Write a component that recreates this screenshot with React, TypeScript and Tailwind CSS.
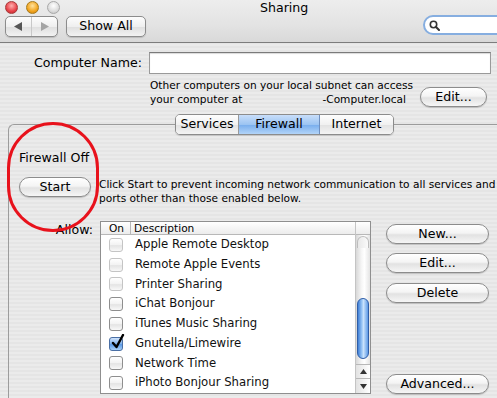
import React from 'react';

const font = { fontFamily: '"DejaVu Sans", "Liberation Sans", sans-serif' };

const rows = [
  { label: 'Apple Remote Desktop', on: false, dim: true },
  { label: 'Remote Apple Events', on: false, dim: true },
  { label: 'Printer Sharing', on: false, dim: true },
  { label: 'iChat Bonjour', on: false, dim: false },
  { label: 'iTunes Music Sharing', on: false, dim: false },
  { label: 'Gnutella/Limewire', on: true, dim: false },
  { label: 'Network Time', on: false, dim: false },
  { label: 'iPhoto Bonjour Sharing', on: false, dim: false },
];

function AquaButton({ children, className = '' }: { children: React.ReactNode; className?: string }) {
  return (
    <div
      className={`shrink-0 flex items-center justify-center rounded-full border border-[#8c8c8c] bg-[linear-gradient(#ffffff,#f4f4f4_45%,#e2e2e2_55%,#f6f6f6)] shadow-[0_1px_1px_rgba(0,0,0,0.18)] text-[12.6px] text-black ${className}`}
    >
      {children}
    </div>
  );
}

function Checkbox({ on, dim }: { on: boolean; dim: boolean }) {
  if (on) {
    return (
      <div className="relative w-[14px] h-[14px] rounded-[3px] border border-[#4a6fa5] bg-[linear-gradient(#cfe3fb,#7fb0ea_50%,#5b9ae6_55%,#a9d0f7)]">
        <svg className="absolute left-[1px] top-[-4px]" width="14" height="16" viewBox="0 0 14 16">
          <path d="M2 9 L5.5 13 L12 1" fill="none" stroke="#000" strokeWidth="2.4" strokeLinecap="round" strokeLinejoin="round" />
        </svg>
      </div>
    );
  }
  return (
    <div
      className={`w-[14px] h-[14px] rounded-[3px] border bg-[linear-gradient(#ffffff,#f2f2f2_50%,#e4e4e4_55%,#f8f8f8)] ${
        dim ? 'border-[#c4c4c4]' : 'border-[#8e8e8e]'
      }`}
    />
  );
}

export default function App() {
  return (
    <div
      style={font}
      className="relative w-[497px] h-[398px] overflow-hidden text-black bg-[repeating-linear-gradient(0deg,#ebebeb_0px,#ebebeb_2px,#e5e5e5_2px,#e5e5e5_4px)]"
    >
      {/* title bar + toolbar */}
      <div className="h-[43px] border-b border-[#7d7d7d] bg-[linear-gradient(#ededed,#e3e3e3_60%,#d9d9d9)] relative">
        <div className="flex items-center gap-[8px] pl-[5px] pt-[1px] h-[14px]">
          <div className="w-[13px] h-[13px] rounded-full border border-[#a53a3a] bg-[radial-gradient(circle_at_50%_35%,#ffb0b0,#e8434a_60%,#b8242a)]" />
          <div className="w-[13px] h-[13px] rounded-full border border-[#a67a1c] bg-[radial-gradient(circle_at_50%_35%,#ffe3a0,#f2a51f_60%,#c87a0d)]" />
          <div className="w-[13px] h-[13px] rounded-full border border-[#a8a8a8] bg-[radial-gradient(circle_at_50%_35%,#ffffff,#dcdcdc_60%,#bcbcbc)]" />
          <div className="ml-[192px] text-[12.6px] leading-none mt-[2px]">Sharing</div>
        </div>
        <div className="flex items-center mt-[2px] pl-[5px] h-[21px]">
          <div className="flex w-[53px] h-[21px] rounded-[5px] border border-[#8c8c8c] bg-[linear-gradient(#fdfdfd,#efefef_50%,#e0e0e0_55%,#f2f2f2)] shadow-[0_1px_1px_rgba(0,0,0,0.15)]">
            <div className="flex-1 flex items-center justify-center border-r border-[#c8c8c8]">
              <svg width="9" height="9" viewBox="0 0 9 9"><path d="M8 0 L0 4.5 L8 9 Z" fill="#555" /></svg>
            </div>
            <div className="flex-1 flex items-center justify-center">
              <svg width="9" height="9" viewBox="0 0 9 9"><path d="M1 0 L9 4.5 L1 9 Z" fill="#a4a4a4" /></svg>
            </div>
          </div>
          <div className="ml-[8px] w-[80px] h-[21px] flex items-center justify-center rounded-[5px] border border-[#8c8c8c] bg-[linear-gradient(#fdfdfd,#efefef_50%,#e0e0e0_55%,#f2f2f2)] shadow-[0_1px_1px_rgba(0,0,0,0.15)] text-[12.6px]">
            Show All
          </div>
          <div className="ml-auto mr-[-12px] w-[86px] h-[20px] -mt-[3px] rounded-full border-2 border-[#86aee0] bg-white flex items-center pl-[4px]">
            <svg width="11" height="11" viewBox="0 0 11 11">
              <circle cx="4.5" cy="4.5" r="3.2" fill="none" stroke="#333" strokeWidth="1.6" />
              <path d="M7 7 L10 10" stroke="#333" strokeWidth="2" strokeLinecap="round" />
            </svg>
          </div>
        </div>
      </div>

      {/* computer name */}
      <div className="flex mt-[9px]">
        <div className="w-[144px] text-right pr-[2px] text-[12.6px] leading-[22px]">Computer Name:</div>
        <div className="ml-[5px] w-[342px] h-[22px] border border-[#9a9a9a] border-t-[#7a7a7a] bg-white shadow-[inset_0_1px_1px_rgba(0,0,0,0.15)]" />
      </div>
      <div className="flex pl-[150px] mt-[3px] text-[10.6px] leading-[14px] whitespace-nowrap">
        <div className="w-[262px] pt-[1px]">
          <div>Other computers on your local subnet can access</div>
          <div className="flex justify-between">
            <span>your computer at</span>
            <span className="mr-[6px]">-Computer.local</span>
          </div>
        </div>
        <AquaButton className="ml-[8px] mt-[10px] w-[67px] h-[20px]">Edit...</AquaButton>
      </div>

      {/* tab panel */}
      <div className="ml-[8px] mt-[17px] h-[300px] border-l border-t border-[#9c9c9c] rounded-tl-[6px] relative">
        <div className="flex justify-start ml-[166px] -mt-[11px]">
          <div className="flex h-[21px] rounded-[5px] border border-[#8c8c8c] overflow-hidden shadow-[0_1px_1px_rgba(0,0,0,0.15)] text-[12.6px]">
            <div className="w-[63px] flex items-center justify-center bg-[linear-gradient(#fdfdfd,#f1f1f1_50%,#e3e3e3_55%,#f4f4f4)] border-r border-[#9a9a9a]">
              Services
            </div>
            <div className="w-[81px] flex items-center justify-center bg-[linear-gradient(#c8defa,#9cc4f2_50%,#7cb0ee_55%,#b2d4f8)] border-r border-[#6f8fbf]">
              Firewall
            </div>
            <div className="w-[73px] flex items-center justify-center bg-[linear-gradient(#fdfdfd,#f1f1f1_50%,#e3e3e3_55%,#f4f4f4)]">
              Internet
            </div>
          </div>
        </div>

        <div className="pl-[10px] mt-[15px] text-[12.6px] leading-[16px]">Firewall Off</div>

        <div className="flex mt-[11px] pl-[10px]">
          <AquaButton className="w-[72px] h-[20px]">Start</AquaButton>
          <div className="ml-[8px] text-[10.6px] leading-[14px] whitespace-nowrap">
            <div>Click Start to prevent incoming network communication to all services and</div>
            <div>ports other than those enabled below.</div>
          </div>
        </div>

        <div className="flex mt-[16px]">
          <div className="w-[84px] text-right text-[12.6px] leading-none pt-[3px]">Allow:</div>
          <div className="ml-[7px] w-[271px] h-[173px] border border-[#8f8f8f] bg-white flex">
            <div className="flex-1 flex flex-col">
              <div className="flex h-[13px] border-b border-[#b8b8b8] bg-[linear-gradient(#ffffff,#ececec)] text-[10.6px] leading-[13px]">
                <div className="w-[30px] pl-[8px] border-r border-[#b8b8b8]">On</div>
                <div className="pl-[3px]">Description</div>
              </div>
              {rows.map((r) => (
                <div key={r.label} className="flex items-center h-[20px] text-[11.7px]">
                  <div className="w-[34px] pl-[8px]">
                    <Checkbox on={r.on} dim={r.dim} />
                  </div>
                  <div className="text-[#111]">{r.label}</div>
                </div>
              ))}
            </div>
            {/* scrollbar */}
            <div className="w-[15px] flex flex-col border-l border-[#c4c4c4]">
              <div className="h-[13px] border-b border-[#b8b8b8] bg-[linear-gradient(#ffffff,#ececec)]" />
              <div className="flex-1 flex flex-col bg-[linear-gradient(90deg,#d8d8d8,#f6f6f6_40%,#ffffff_60%,#e4e4e4)]">
                <div className="h-[12px] mx-[1px] mt-[1px] rounded-t-full border-t border-x border-[#bdbdbd] bg-[linear-gradient(90deg,#e8e8e8,#fafafa)]" />
                <div className="mt-[50px] mx-[1px] h-[61px] rounded-full border border-[#2f5ea8] bg-[linear-gradient(90deg,#3f7fd6,#9cc8f6_40%,#c9e2fc_55%,#5d9ae6)]" />
              </div>
              <div className="h-[14px] flex items-center justify-center border-t border-[#b8b8b8] bg-[linear-gradient(90deg,#e2e2e2,#ffffff)]">
                <svg width="7" height="5" viewBox="0 0 7 5"><path d="M3.5 0 L7 5 L0 5 Z" fill="#333" /></svg>
              </div>
              <div className="h-[15px] flex items-center justify-center border-t border-[#b8b8b8] bg-[linear-gradient(90deg,#e2e2e2,#ffffff)]">
                <svg width="7" height="5" viewBox="0 0 7 5"><path d="M0 0 L7 0 L3.5 5 Z" fill="#333" /></svg>
              </div>
            </div>
          </div>
          <div className="ml-[15px] w-[103px] flex flex-col">
            <AquaButton className="h-[20px] mt-[3px]">New...</AquaButton>
            <AquaButton className="h-[20px] mt-[9px]">Edit...</AquaButton>
            <AquaButton className="h-[20px] mt-[10px]">Delete</AquaButton>
            <AquaButton className="h-[20px] mt-[71px]">Advanced...</AquaButton>
          </div>
        </div>
      </div>

      {/* red annotation circle */}
      <div className="absolute left-[7px] top-[122px] w-[92px] h-[110px] rounded-full border-[3px] border-[#e8121c]" />
    </div>
  );
}
